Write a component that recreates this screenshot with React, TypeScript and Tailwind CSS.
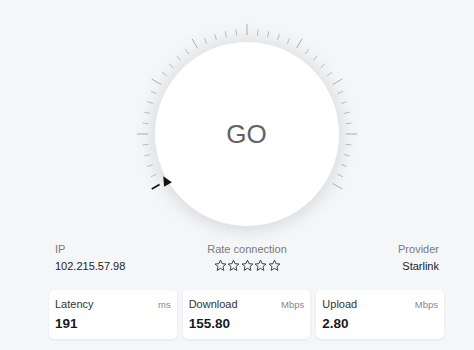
import React from 'react'

const TICKS = Array.from({ length: 41 }, (_, i) => -120 + i * 6)

function Dial() {
  const cx = 120
  const cy = 120
  return (
    <svg width={240} height={240} viewBox="0 0 240 240" className="absolute inset-0">
      {TICKS.map((deg, i) => {
        const major = i % 5 === 0
        const first = i === 0
        const a = (deg * Math.PI) / 180
        const r1 = first ? 101 : 99
        const r2 = major ? 110 : 105
        const sx = Math.sin(a)
        const sy = -Math.cos(a)
        return (
          <line
            key={deg}
            x1={cx + sx * r1}
            y1={cy + sy * r1}
            x2={cx + sx * r2}
            y2={cy + sy * r2}
            stroke={first ? '#111' : major ? '#a9adb1' : '#b9bcc0'}
            strokeWidth={first ? 1.6 : 1}
          />
        )
      })}
    </svg>
  )
}

function Pointer() {
  // small triangle at -120deg, pointing clockwise along the rim
  return (
    <svg width={240} height={240} viewBox="0 0 240 240" className="absolute inset-0 pointer-events-none">
      <g transform="translate(39 167) rotate(-30)">
        <polygon points="0,-5.5 4.5,4 -4.5,4" fill="#111" />
      </g>
    </svg>
  )
}

function StarOutline() {
  return (
    <svg width={13} height={13} viewBox="0 0 24 24">
      <polygon
        points="12,2 14.9,8.6 22,9.3 16.6,14 18.2,21 12,17.3 5.8,21 7.4,14 2,9.3 9.1,8.6"
        fill="none"
        stroke="#333"
        strokeWidth={1.7}
        strokeLinejoin="miter"
      />
    </svg>
  )
}

function StatCard({ label, unit, value }: { label: string; unit: string; value: string }) {
  return (
    <div className="h-[49px] rounded-[5px] bg-white px-[6px] pt-[8px] shadow-[0_1px_3px_rgba(0,0,0,0.07)]">
      <div className="flex items-baseline justify-between">
        <span className="text-[11px] leading-[13px] text-[#333]">{label}</span>
        <span className="text-[9.5px] leading-[13px] text-[#888]">{unit}</span>
      </div>
      <div className="mt-[5px] text-[13.5px] font-bold leading-[16px] text-[#1a1a1a]">{value}</div>
    </div>
  )
}

export default function App() {
  return (
    <div className="h-[350px] w-[474px] overflow-hidden bg-[#f5f6f7] font-['Liberation_Sans',Arial,sans-serif]">
      <div className="ml-[49px] w-[395px]">
        <div className="relative h-[243px]">
          <div className="absolute left-1/2 top-[14px] h-[240px] w-[240px] -translate-x-1/2">
            <div className="absolute left-[18px] top-[18px] h-[204px] w-[204px] rounded-full bg-[#eceef0] blur-[6px]" />
            <Dial />
            <button className="absolute left-[28px] top-[28px] flex h-[184px] w-[184px] items-center justify-center rounded-full bg-white text-[26px] text-[#5f6368] shadow-[0_2px_14px_2px_rgba(0,0,0,0.07)]">
              GO
            </button>
            <Pointer />
          </div>
        </div>

        <div className="grid grid-cols-3 px-[6px] pr-[5px]">
          <div>
            <div className="text-[11px] leading-[13px] text-[#7a7a7a]">IP</div>
            <div className="mt-[4px] text-[11px] leading-[13px] text-[#222]">102.215.57.98</div>
          </div>
          <div className="flex flex-col items-center">
            <div className="text-[11px] leading-[13px] text-[#7a7a7a]">Rate connection</div>
            <div className="mt-[3px] flex gap-[0.5px]">
              <StarOutline />
              <StarOutline />
              <StarOutline />
              <StarOutline />
              <StarOutline />
            </div>
          </div>
          <div className="text-right">
            <div className="text-[11px] leading-[13px] text-[#7a7a7a]">Provider</div>
            <div className="mt-[4px] text-[11px] leading-[13px] text-[#222]">Starlink</div>
          </div>
        </div>

        <div className="mt-[17px] grid grid-cols-3 gap-[6px]">
          <StatCard label="Latency" unit="ms" value="191" />
          <StatCard label="Download" unit="Mbps" value="155.80" />
          <StatCard label="Upload" unit="Mbps" value="2.80" />
        </div>
      </div>
    </div>
  )
}
